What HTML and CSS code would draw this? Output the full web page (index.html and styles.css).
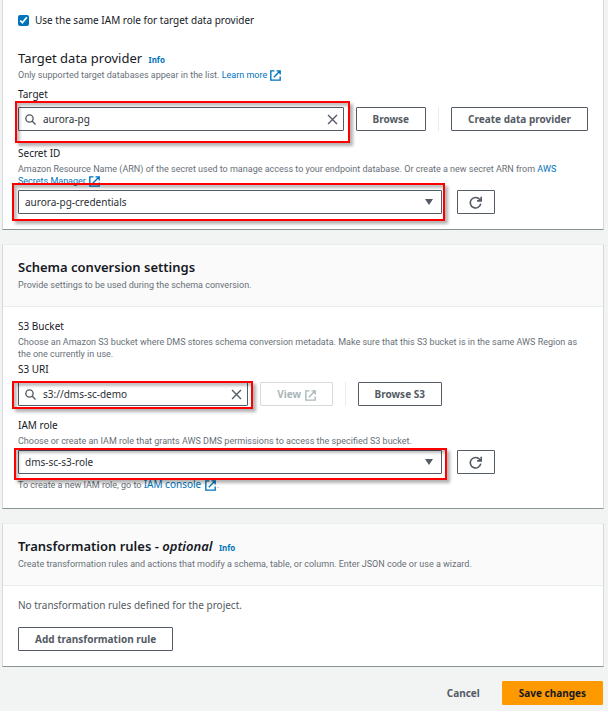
FILE: index.html
```html
<!DOCTYPE html>
<html lang="en">
<head>
<meta charset="utf-8">
<meta name="viewport" content="width=device-width, initial-scale=1">
<title>Migration project settings</title>
<link rel="stylesheet" href="styles.css">
</head>
<body>
<svg class="sprite" aria-hidden="true">
  <symbol id="i-search" viewBox="0 0 16 16"><circle cx="6.5" cy="6.5" r="5.3"/><path d="M10.3 10.3 15.3 15.3"/></symbol>
  <symbol id="i-close" viewBox="0 0 16 16"><path d="M1.5 1.5l13 13M14.5 1.5l-13 13"/></symbol>
  <symbol id="i-external" viewBox="0 0 16 16"><path d="M6.5 1.2H1.2v13.6h13.6V9.5M9.5 1.2h5.3v5.3M14.5 1.5 5.5 10.5"/></symbol>
  <symbol id="i-refresh" viewBox="0 0 16 16"><path d="M14.5 9.5a6.5 6.5 0 1 1-1.5-5.5l1.5 1.5M15 1v5h-5"/></symbol>
  <symbol id="i-caret" viewBox="0 0 8 8"><path d="M0 1h8L4 7z"/></symbol>
</svg>
<form class="page">
  <section class="card card-continued">
    <div class="card-body">
      <label class="check"><input type="checkbox" checked><span>Use the same IAM role for target data provider</span></label>
      <h3 class="subheading">Target data provider <a class="info" href="#">Info</a></h3>
      <p class="hint">Only supported target databases appear in the list. <a href="#">Learn more <svg class="icon ext"><use href="#i-external"/></svg></a></p>
      <label class="label target-label" for="target">Target</label>
      <div class="row">
        <div class="field">
          <svg class="icon search"><use href="#i-search"/></svg>
          <input id="target" type="text" value="aurora-pg">
          <button class="clear" type="button" aria-label="Clear target"><svg class="icon"><use href="#i-close"/></svg></button>
          <span class="mark mark-target"></span>
        </div>
        <button class="btn" type="button">Browse</button>
        <span class="divider"></span>
        <button class="btn" type="button">Create data provider</button>
      </div>
      <label class="label secret-label" for="secret">Secret ID</label>
      <p class="hint">Amazon Resource Name (ARN) of the secret used to manage access to your endpoint database. Or create a new secret ARN from <a href="#">AWS Secrets Manager <svg class="icon ext"><use href="#i-external"/></svg></a></p>
      <div class="columns secret-row">
        <div class="field">
          <select id="secret"><option>aurora-pg-credentials</option></select>
          <svg class="caret"><use href="#i-caret"/></svg>
          <span class="mark mark-secret"></span>
        </div>
        <button class="btn btn-icon" type="button" aria-label="Refresh secrets"><svg class="icon"><use href="#i-refresh"/></svg></button>
      </div>
    </div>
  </section>

  <section class="card">
    <header class="card-header">
      <h2>Schema conversion settings</h2>
      <p class="hint">Provide settings to be used during the schema conversion.</p>
    </header>
    <div class="card-body">
      <h3 class="label">S3 Bucket</h3>
      <p class="hint">Choose an Amazon S3 bucket where DMS stores schema conversion metadata. Make sure that this S3 bucket is in the same AWS Region as the one currently in use.</p>
      <label class="label uri-label" for="uri">S3 URI</label>
      <div class="columns">
        <div class="row">
          <div class="field">
            <svg class="icon search"><use href="#i-search"/></svg>
            <input id="uri" type="text" value="s3://dms-sc-demo">
            <button class="clear" type="button" aria-label="Clear S3 URI"><svg class="icon"><use href="#i-close"/></svg></button>
            <span class="mark mark-uri"></span>
          </div>
          <button class="btn" type="button" disabled>View <svg class="icon ext"><use href="#i-external"/></svg></button>
          <span class="divider"></span>
          <button class="btn" type="button">Browse S3</button>
        </div>
      </div>
      <label class="label role-label" for="role">IAM role</label>
      <p class="hint">Choose or create an IAM role that grants AWS DMS permissions to access the specified S3 bucket.</p>
      <div class="columns role-row">
        <div class="field">
          <select id="role"><option>dms-sc-s3-role</option></select>
          <svg class="caret"><use href="#i-caret"/></svg>
          <span class="mark mark-role"></span>
        </div>
        <button class="btn btn-icon" type="button" aria-label="Refresh roles"><svg class="icon"><use href="#i-refresh"/></svg></button>
      </div>
      <p class="hint role-note">To create a new IAM role, go to <a class="console" href="#">IAM console <svg class="icon ext"><use href="#i-external"/></svg></a>.</p>
    </div>
  </section>

  <section class="card">
    <header class="card-header">
      <h2>Transformation rules - <em>optional</em> <a class="info" href="#">Info</a></h2>
      <p class="hint">Create transformation rules and actions that modify a schema, table, or column. Enter JSON code or use a wizard.</p>
    </header>
    <div class="card-body">
      <p class="empty">No transformation rules defined for the project.</p>
      <button class="btn" type="button">Add transformation rule</button>
    </div>
  </section>

  <footer class="actions">
    <button class="btn btn-link" type="button">Cancel</button>
    <button class="btn btn-primary" type="submit">Save changes</button>
  </footer>
</form>
</body>
</html>
```
FILE: styles.css
```css
* { box-sizing: border-box; }
body {
  margin: 0;
  background: #f2f3f3;
  color: #16191f;
  font: 10px/16px "Noto Sans", "Open Sans", sans-serif;
}
h2, h3, p { margin: 0; }
a { color: #0073bb; text-decoration: none; }
.sprite { position: absolute; width: 0; height: 0; }
.page { padding: 0 4px 0 2px; }

.card {
  margin-bottom: 14px;
  background: #fff;
  border: 1px solid #d5dbdb;
  border-top-color: #eaeded;
  border-bottom-color: #879596;
}
.card-continued { border-top: 0; }
.card-header {
  padding: 12px 15px 15px;
  background: #fafafa;
  border-bottom: 1px solid #eaeded;
}
.card-body { padding: 11px 15px 15px; }
.card-continued .card-body { padding-top: 12px; }
h2, .subheading { font-size: 13px; line-height: 20px; }
h2 { font-weight: 600; margin-bottom: 2px; }
.subheading { margin: 20px 0 1px; font-weight: 400; }
.info { margin-left: 3px; font-size: 8px; font-weight: 700; line-height: 12px; }

.hint { color: #687078; font: 9px/12px Roboto, "Noto Sans", sans-serif; }
.label { display: block; margin-bottom: 2px; font-size: 10px; font-weight: 400; }
.target-label { margin: 5px 0; }
.secret-label { margin-top: 14px; }
.uri-label { margin: 1px 0 5px; }
.role-label { margin-top: 11px; }
.secret-row, .role-row { margin-top: 3px; }
.role-note { margin-top: 3px; line-height: 16px; }
.console { font: 10px/12px "Noto Sans", "Open Sans", sans-serif; }

.check { display: flex; align-items: center; gap: 6px; }
.check input {
  width: 11px;
  height: 11px;
  margin: 0;
  accent-color: #0073bb;
}

.row { display: flex; gap: 12px; }
.columns { display: grid; grid-template-columns: 55fr 17fr; gap: 15px; }
.field { position: relative; display: flex; flex: 1; min-width: 0; }
.field input, .field select {
  width: 100%;
  height: 24px;
  padding: 0 24px;
  color: #2a2e35;
  background: #fff;
  border: 1px solid #545b64;
  border-radius: 1px;
  font: inherit;
}
.field select { appearance: none; padding: 0 6px; }

.icon {
  width: 11px;
  height: 11px;
  fill: none;
  stroke: currentColor;
  stroke-width: 2;
}
.ext { margin: -2px 1px; vertical-align: -1px; }
.btn .ext { margin-right: 0; }
.search { position: absolute; left: 7px; top: 7px; color: #545b64; }
.clear {
  position: absolute;
  right: 6px;
  top: 7px;
  display: flex;
  padding: 0;
  color: #545b64;
  background: none;
  border: 0;
}
.caret { position: absolute; right: 9px; top: 8px; width: 8px; height: 8px; fill: #545b64; }

.mark {
  position: absolute;
  z-index: 1;
  border: 2px solid #fe0000;
  box-shadow: 3px 3px 3px rgb(0 0 0 / 30%), inset 3px 3px 3px rgb(0 0 0 / 25%);
  pointer-events: none;
}
.mark-target { inset: -6px -6px -12px -3px; }
.mark-secret { inset: -7px -3px -7px -6px; }
.mark-uri { inset: -1px -5px -3px -6px; }
.mark-role { inset: -2px -5px -6px -4px; }

.btn {
  height: 24px;
  padding: 0 16px;
  color: #545b64;
  background: #fff;
  border: 1px solid #545b64;
  border-radius: 1px;
  font: 700 10px/16px "Noto Sans", "Open Sans", sans-serif;
  white-space: nowrap;
}
.btn:disabled { color: #aab7b8; border-color: #d5dbdb; }
.btn-icon { display: flex; align-items: center; justify-content: center; width: 38px; padding: 0; }
.btn-icon .icon { width: 13px; height: 13px; }
.divider { width: 1px; background: #eaeded; }
.empty { margin-bottom: 14px; color: #545b64; }
.empty + .btn { display: block; }

.actions { display: flex; justify-content: flex-end; gap: 5px; padding-right: 1px; }
.btn-link { background: none; border-color: transparent; }
.btn-primary { color: #16191f; background: #ff9900; border-color: #ff9900; }
```
